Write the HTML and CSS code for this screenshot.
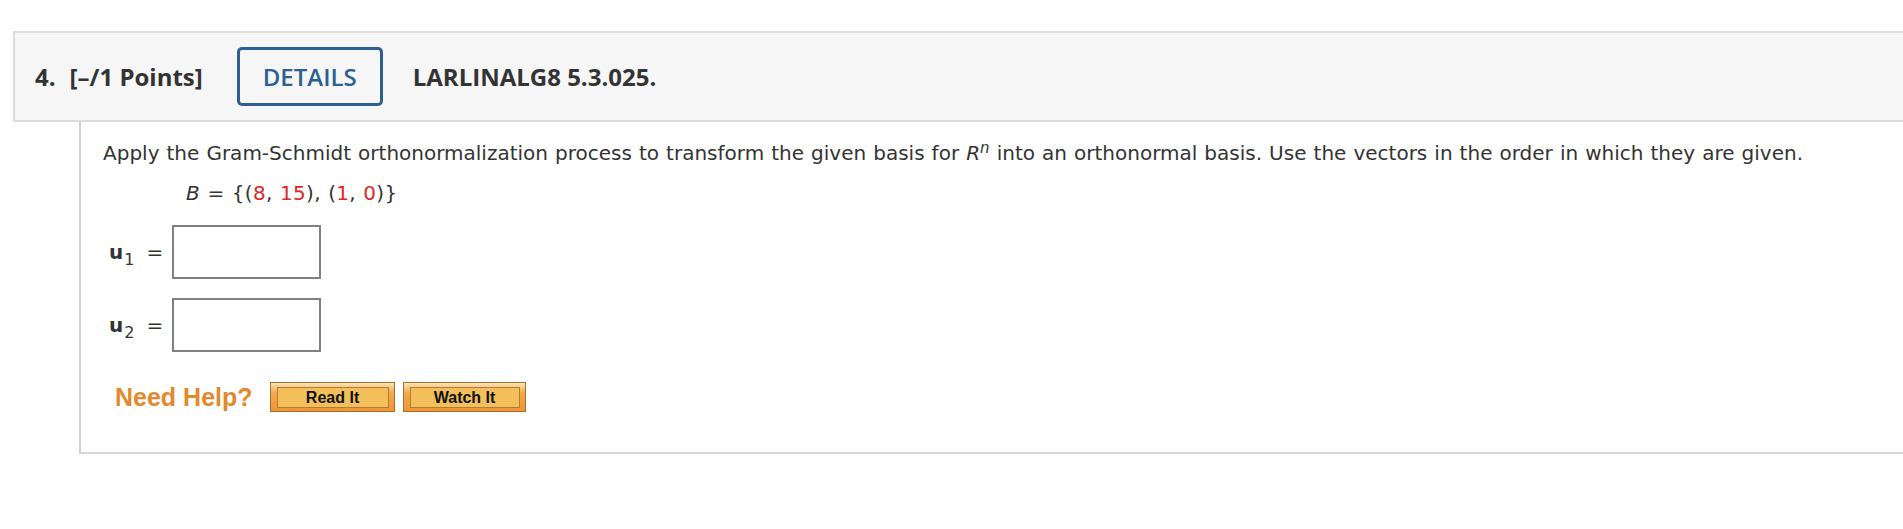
FILE: index.html
```html
<!DOCTYPE html>
<html lang="en">
<head>
<meta charset="utf-8">
<title>Question 4</title>
<link rel="stylesheet" href="styles.css">
</head>
<body>
<div class="question">
  <div class="q-header">
    <span class="q-num">4.</span>
    <span class="q-points">[–/1 Points]</span>
    <a class="details-btn">DETAILS</a>
    <span class="q-code">LARLINALG8 5.3.025.</span>
  </div>
  <div class="q-body">
    <p class="prompt">Apply the Gram-Schmidt orthonormalization process to transform the given basis for <i>R</i><sup><i>n</i></sup> into an orthonormal basis. Use the vectors in the order in which they are given.</p>
    <p class="basis"><i>B</i> = {(<span class="red">8</span>, <span class="red">15</span>), (<span class="red">1</span>, <span class="red">0</span>)}</p>
    <div class="answer-row">
      <span class="label"><b>u</b><sub>1</sub></span>
      <span class="eq">=</span>
      <input class="ans" type="text">
    </div>
    <div class="answer-row second">
      <span class="label"><b>u</b><sub>2</sub></span>
      <span class="eq">=</span>
      <input class="ans" type="text">
    </div>
    <div class="help-row">
      <span class="need-help">Need Help?</span>
      <a class="help-btn read"><span>Read It</span></a>
      <a class="help-btn watch"><span>Watch It</span></a>
    </div>
  </div>
</div>
</body>
</html>
```
FILE: styles.css
```css
html, body {
  margin: 0;
  padding: 0;
  background: #ffffff;
}

body {
  font-family: "DejaVu Sans", Verdana, sans-serif;
  color: #333333;
  overflow: hidden;
}

.question {
  padding-top: 31px;
}

.q-header {
  display: flex;
  align-items: center;
  height: 87px;
  margin-left: 13px;
  padding-left: 20px;
  border: 2px solid #dddddd;
  border-right: none;
  background: #f6f6f6;
  font-family: "Open Sans", sans-serif;
  font-weight: 700;
  font-size: 24px;
  color: #333333;
}

.q-num {
  margin-right: 14px;
}

.q-points {
  margin-right: 34px;
}

.details-btn {
  display: flex;
  align-items: center;
  height: 53px;
  padding: 0 23px;
  margin-right: 30px;
  border: 3px solid #2c5f94;
  border-radius: 5px;
  color: #2c5f94;
  font-weight: 600;
  background: #f6f6f6;
}

.q-body {
  margin-left: 79px;
  padding: 16px 0 40px 22px;
  border-left: 2px solid #cfcfcf;
  border-bottom: 2px solid #d6d6d6;
  font-size: 20px;
}

.prompt {
  margin: 0 0 10px;
  line-height: 30px;
  white-space: nowrap;
  word-spacing: 0.7px;
}

.prompt sup {
  font-size: 15px;
  line-height: 0;
  vertical-align: 7px;
}

.basis {
  margin: 0;
  padding-left: 83px;
  line-height: 30px;
  word-spacing: 0.7px;
  letter-spacing: 0.3px;
}

.red {
  color: #e3261b;
}

.answer-row {
  display: flex;
  align-items: center;
  margin: 17px 0 0 6px;
  line-height: 30px;
}

.answer-row.second {
  margin-top: 19px;
}

.label b {
  font-weight: 700;
}

.label sub {
  font-size: 16px;
  line-height: 0;
  vertical-align: -6px;
  margin-left: 1px;
}

.eq {
  margin-left: 12px;
  margin-right: 9px;
}

.ans {
  box-sizing: border-box;
  width: 149px;
  height: 54px;
  margin: 0;
  border: 2px solid #808080;
  border-radius: 0;
  background: #ffffff;
  padding: 0 6px;
  font-size: 18px;
}

.help-row {
  display: flex;
  align-items: center;
  margin: 30px 0 0 12px;
  height: 30px;
}

.need-help {
  font-family: "Liberation Sans", Arial, sans-serif;
  font-weight: 700;
  font-size: 25px;
  color: #e4882e;
  margin-right: 17px;
}

.help-btn {
  box-sizing: border-box;
  display: block;
  height: 30px;
  width: 125px;
  padding: 4px 5px 3px 6px;
  border: 1px solid #a5702e;
  background: linear-gradient(#fde4b8 0%, #f3a84c 35%, #ee9534 100%);
}

.help-btn.watch {
  width: 123px;
  margin-left: 8px;
}

.help-btn span {
  box-sizing: border-box;
  display: flex;
  align-items: center;
  justify-content: center;
  height: 100%;
  border: 1px solid #b47b36;
  background: #f2bf5b;
  font-family: "Liberation Sans", Arial, sans-serif;
  font-weight: 700;
  font-size: 16px;
  color: #111111;
}
```
